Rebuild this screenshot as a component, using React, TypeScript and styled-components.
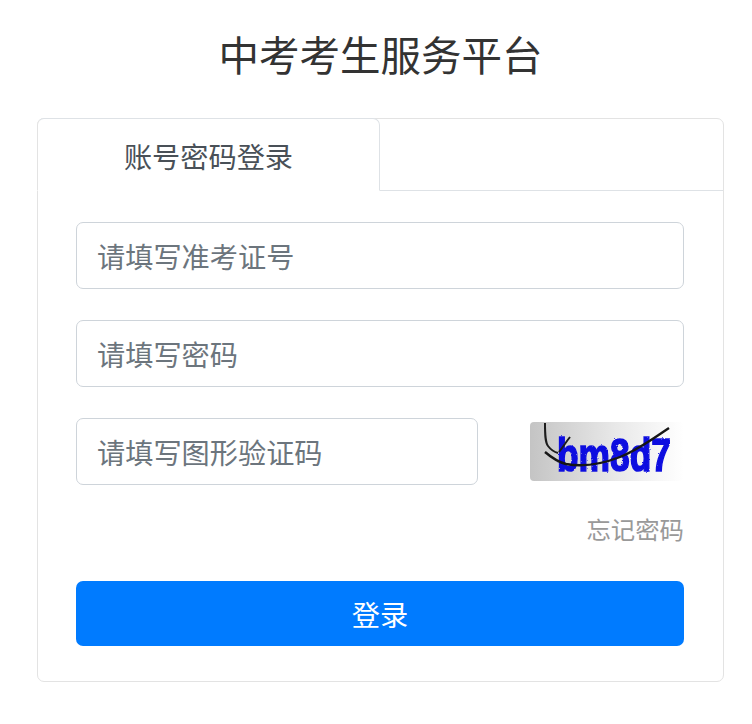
import styled, { createGlobalStyle } from "styled-components";

const GlobalStyle = createGlobalStyle`
  html, body {
    margin: 0;
    padding: 0;
    background-color: #fff;
    font-family: "Liberation Sans", "Noto Sans CJK SC", sans-serif;
  }
  * {
    box-sizing: border-box;
  }
`;

const Page = styled.div`
  width: 752px;
  height: 724px;
  padding: 29px 28px 0 37px;
  overflow: hidden;
`;

const Title = styled.h1`
  margin: 0 0 33px 0;
  height: 56px;
  line-height: 56px;
  text-align: center;
  font-size: 40.5px;
  font-weight: 400;
  color: #333;
`;

const Card = styled.div`
  width: 687px;
  height: 564px;
  border: 1px solid #e3e3e3;
  border-radius: 7px;
`;

const Tabs = styled.div`
  display: flex;
  height: 72px;
  border-bottom: 1px solid #dee2e6;
`;

const Tab = styled.div`
  width: 343px;
  height: 73px;
  margin-top: -1px;
  margin-left: -1px;
  padding-top: 2px;
  display: flex;
  align-items: center;
  justify-content: center;
  background-color: #fff;
  border: 1px solid #dee2e6;
  border-bottom: 1px solid #fff;
  border-left-color: #e3e3e3;
  border-radius: 7px 7px 0 0;
  font-size: 28.2px;
  color: #495057;
`;

const Form = styled.form`
  display: flex;
  flex-direction: column;
  padding: 31px 39px 0 38px;
`;

const Row = styled.div`
  display: flex;
  align-items: flex-start;
  justify-content: space-between;
  margin-bottom: 31px;
`;

const Input = styled.input<{ $short?: boolean }>`
  width: ${(props) => (props.$short ? "402px" : "100%")};
  height: 67px;
  padding: 5px 20px 0 20px;
  border: 1px solid #ced4da;
  border-radius: 7px;
  background-color: #fff;
  font-family: inherit;
  font-size: 28.2px;
  color: #495057;
  outline: none;
  &::placeholder {
    color: #6c757d;
    opacity: 1;
  }
`;

const Captcha = styled.svg`
  display: block;
  width: 154px;
  height: 59px;
  margin-top: 4px;
  border-radius: 4px;
`;

const Forgot = styled.a`
  align-self: flex-end;
  margin-top: -2px;
  height: 34px;
  line-height: 34px;
  font-size: 24.4px;
  color: #999;
  text-decoration: none;
`;

const Submit = styled.button`
  width: 100%;
  height: 65px;
  margin-top: 33px;
  padding-top: 1px;
  border: none;
  border-radius: 7px;
  background-color: #007bff;
  color: #fff;
  font-family: inherit;
  font-size: 28.2px;
`;

function CaptchaImage() {
  return (
    <Captcha viewBox="0 0 154 59">
      <defs>
        <linearGradient id="captchaBg" x1="0" x2="1" y1="0" y2="0">
          <stop offset="0" stopColor="#c4c4c4" />
          <stop offset="0.55" stopColor="#e8e8e8" />
          <stop offset="1" stopColor="#ffffff" />
        </linearGradient>
        <filter id="captchaFuzz" x="-5%" y="-5%" width="110%" height="110%">
          <feTurbulence type="fractalNoise" baseFrequency="0.8" numOctaves="1" seed="3" />
          <feDisplacementMap in="SourceGraphic" scale="2.5" />
          <feGaussianBlur stdDeviation="0.6" />
        </filter>
      </defs>
      <rect width="154" height="59" fill="url(#captchaBg)" />
      <text
        x="27"
        y="49"
        textLength="114"
        lengthAdjust="spacingAndGlyphs"
        fill="#1010e0"
        stroke="#1010e0"
        strokeWidth="1.6"
        fontFamily="'Liberation Sans', sans-serif"
        fontWeight="700"
        fontSize="46"
        filter="url(#captchaFuzz)"
      >
        bm8d7
      </text>
      <path
        d="M15 1 C15 12 15 20 18 24 C21 28 24 30 28 31 M40 15 C36 20 33 25 29 30"
        fill="none"
        stroke="#1c1c1c"
        strokeWidth="2"
      />
      <path
        d="M15 30 C22 36 28 40 36 42 C52 45 72 42 90 35 C108 28 124 16 139 6"
        fill="none"
        stroke="#161616"
        strokeWidth="2.4"
      />
    </Captcha>
  );
}

function App() {
  return (
    <Page>
      <GlobalStyle />
      <Title>中考考生服务平台</Title>
      <Card>
        <Tabs>
          <Tab>账号密码登录</Tab>
        </Tabs>
        <Form>
          <Row>
            <Input type="text" placeholder="请填写准考证号" />
          </Row>
          <Row>
            <Input type="password" placeholder="请填写密码" />
          </Row>
          <Row>
            <Input $short type="text" placeholder="请填写图形验证码" />
            <CaptchaImage />
          </Row>
          <Forgot href="#">忘记密码</Forgot>
          <Submit type="button">登录</Submit>
        </Form>
      </Card>
    </Page>
  );
}

export default App;
